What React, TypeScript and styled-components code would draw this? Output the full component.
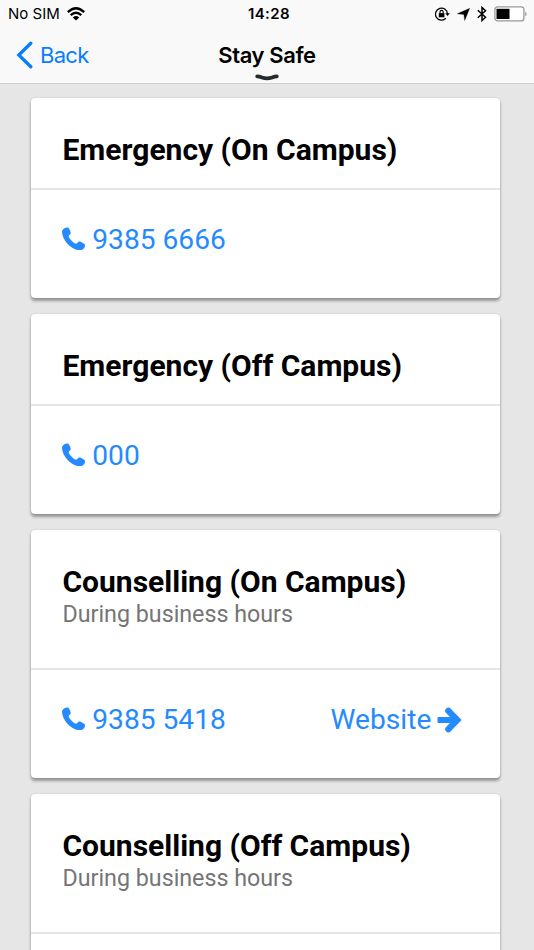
import React from "react";
import styled, { createGlobalStyle } from "styled-components";

const Global = createGlobalStyle`
  * { box-sizing: border-box; }
  body { margin: 0; background: #e6e6e6; overflow: hidden; }
  svg { flex: none; }
`;

const Screen = styled.div`
  height: 950px;
  overflow: hidden;
  background: #e6e6e6;
  font-family: Roboto, sans-serif;
`;

const Header = styled.header`
  height: 84px;
  background: #f9f9f9;
  border-bottom: 1px solid #cfcfcf;
  font-family: Inter, sans-serif;
  color: #000;
`;

const Columns = styled.div`
  display: grid;
  grid-template-columns: 1fr auto 1fr;
  align-items: center;
`;

const StatusBar = styled(Columns)`
  height: 28px;
  padding: 0 6px 0 8px;
  font-size: 15px;
  line-height: 28px;
`;

const Carrier = styled.div`
  display: flex;
  align-items: center;
  gap: 7px;
  letter-spacing: 0;
`;

const Clock = styled.div`
  font-weight: 600;
  letter-spacing: 0.4px;
  padding-left: 2px;
`;

const StatusIcons = styled.div`
  display: flex;
  align-items: center;
  justify-content: flex-end;
  gap: 7px;
`;

const NavBar = styled(Columns)`
  height: 47px;
  padding: 0 16px;
  font-size: 22px;
`;

const BackButton = styled.a`
  display: flex;
  align-items: center;
  gap: 7px;
  padding-top: 6px;
  height: 47px;
  color: #087dff;
  letter-spacing: -0.7px;
`;

const NavTitle = styled.h1`
  margin: 0;
  padding-top: 6px;
  height: 47px;
  font-size: 22px;
  line-height: 42px;
  font-weight: 600;
  letter-spacing: -0.4px;
`;

const Handle = styled.svg`
  display: block;
  margin: -1px auto 0;
`;

const Cards = styled.main`
  display: flex;
  flex-direction: column;
  gap: 16px;
  padding: 14.4px 33.7px 0 31.3px;
`;

const Card = styled.section<{ $tall?: boolean }>`
  flex: none;
  height: ${(p) => (p.$tall ? 248 : 200)}px;
  background: #fff;
  border-radius: 4px;
  box-shadow: 0 3px 3px rgba(0, 0, 0, 0.34), 0 0 2px rgba(0, 0, 0, 0.18);
`;

const CardHead = styled.div<{ $tall?: boolean }>`
  height: ${(p) => (p.$tall ? 140 : 92)}px;
  padding: 34px 31.2px 0;
  border-bottom: 2px solid #e6e6e6;
`;

const CardTitle = styled.h2`
  margin: 0;
  font-size: 30px;
  line-height: 36px;
  font-weight: 700;
  color: #000;
  white-space: nowrap;
`;

const CardNote = styled.p`
  margin: 0;
  font-size: 23.25px;
  line-height: 29px;
  color: #757575;
`;

const Actions = styled.div`
  display: flex;
  justify-content: space-between;
  padding: 32px 37px 0 31px;
`;

const ActionLink = styled.a`
  display: flex;
  align-items: center;
  gap: 6px;
  height: 36px;
  font-size: 28.15px;
  line-height: 36px;
  color: #268aff;
`;

const PhoneIcon = () => (
  <svg width="24" height="26" viewBox="0 0 24 26" fill="currentColor">
    <path d="M.3 3.6C.9 1.6 3.6.1 5.6.5C7.2 1 9 4.8 8.7 6.3C8.4 7.7 7 8.1 6.7 9.1C6.4 10.9 12.2 16.8 14.2 16.8C15.5 16.7 15.8 14.7 17.3 14.6C18.9 14.6 22.5 16.7 22.9 17.9C23.5 20.2 21.4 22.4 19.4 22.9C15.4 23.9 9.7 21.2 5.6 16.9C1.5 12.6-.7 6.9.3 3.6Z" />
  </svg>
);

const ArrowIcon = () => (
  <svg width="26" height="26" viewBox="0 0 26 26" fill="none">
    <path d="M1.3 10H19V16H1.3Q.5 16 .5 15.2V10.8Q.5 10 1.3 10Z" fill="currentColor" />
    <path d="M11.4 3.9L20.2 13L11.4 22.1" stroke="currentColor" strokeWidth="6.4" strokeLinecap="round" strokeLinejoin="miter" />
  </svg>
);

const WifiIcon = () => (
  <svg width="18" height="14" viewBox="0 0 18 14" fill="none" stroke="#000" strokeWidth="2.3">
    <path d="M.8 5.2Q9-2.7 17.2 5.2M3.7 8.2Q9 3.2 14.3 8.2" />
    <path d="M9 13.5L5.8 10.4Q9 7.6 12.2 10.4Z" fill="#000" stroke="none" />
  </svg>
);

const LockIcon = () => (
  <svg width="15" height="14" viewBox="0 0 15 14" fill="none" stroke="#000">
    <path d="M10.9 11.2A6 6 0 1 1 12.5 7" strokeWidth="1.3" />
    <path d="M10.2 6.2H14.9L12.5 9Z" fill="#000" stroke="none" />
    <rect x="3.8" y="6.1" width="5.6" height="4.2" fill="#000" stroke="none" />
    <path d="M5 6.5V5a1.6 1.6 0 0 1 3.2 0V6.5" strokeWidth="1.1" />
  </svg>
);

const LocationIcon = () => (
  <svg width="13" height="13" viewBox="0 0 13 13">
    <path d="M12.7.3L7.7 12.6L6.9 6.4L.3 5.8Z" fill="#000" stroke="#000" strokeWidth=".3" />
  </svg>
);

const BluetoothIcon = () => (
  <svg width="10" height="16" viewBox="0 0 10 16" fill="none" stroke="#000" strokeWidth="1.5">
    <path d="M.8 4.3L8.5 11.2L5 14.5V1.5L8.5 4.8L.8 11.7" />
  </svg>
);

const BatteryIcon = () => (
  <svg width="34" height="16" viewBox="0 0 34 16">
    <rect x=".9" y=".9" width="29" height="14" rx="2.7" fill="#fff" stroke="#999" strokeWidth="1.3" />
    <rect x="2.5" y="2.8" width="13" height="10.2" fill="#000" />
    <path d="M31.2 5.5Q34 8 31.2 10.5Z" fill="#999" />
  </svg>
);

type Contact = { title: string; note?: string; phone?: string; website?: boolean };

const contacts: Contact[] = [
  { title: "Emergency (On Campus)", phone: "9385 6666" },
  { title: "Emergency (Off Campus)", phone: "000" },
  { title: "Counselling (On Campus)", note: "During business hours", phone: "9385 5418", website: true },
  { title: "Counselling (Off Campus)", note: "During business hours" },
];

export default function App() {
  return (
    <Screen>
      <Global />
      <Header>
        <StatusBar>
          <Carrier>No SIM <WifiIcon /></Carrier>
          <Clock>14:28</Clock>
          <StatusIcons>
            <LockIcon />
            <LocationIcon />
            <BluetoothIcon />
            <BatteryIcon />
          </StatusIcons>
        </StatusBar>
        <NavBar>
          <BackButton>
            <svg width="17" height="28" viewBox="0 0 17 28" fill="none" stroke="currentColor" strokeWidth="3.3" strokeLinecap="round">
              <path d="M14.8 2.2L2.8 14L14.8 25.8" />
            </svg>
            Back
          </BackButton>
          <NavTitle>Stay Safe</NavTitle>
        </NavBar>
        <Handle width="24" height="7" viewBox="0 0 24 7" fill="none">
          <path d="M2.2 2.3Q4 2.3 7 3.5Q12 5.2 17 3.5Q20 2.3 21.8 2.3" stroke="#252b29" strokeWidth="3.8" strokeLinecap="round" />
        </Handle>
      </Header>
      <Cards>
        {contacts.map((c) => (
          <Card key={c.title} $tall={!!c.note}>
            <CardHead $tall={!!c.note}>
              <CardTitle>{c.title}</CardTitle>
              {c.note && <CardNote>{c.note}</CardNote>}
            </CardHead>
            <Actions>
              {c.phone && <ActionLink><PhoneIcon />{c.phone}</ActionLink>}
              {c.website && <ActionLink>Website<ArrowIcon /></ActionLink>}
            </Actions>
          </Card>
        ))}
      </Cards>
    </Screen>
  );
}
